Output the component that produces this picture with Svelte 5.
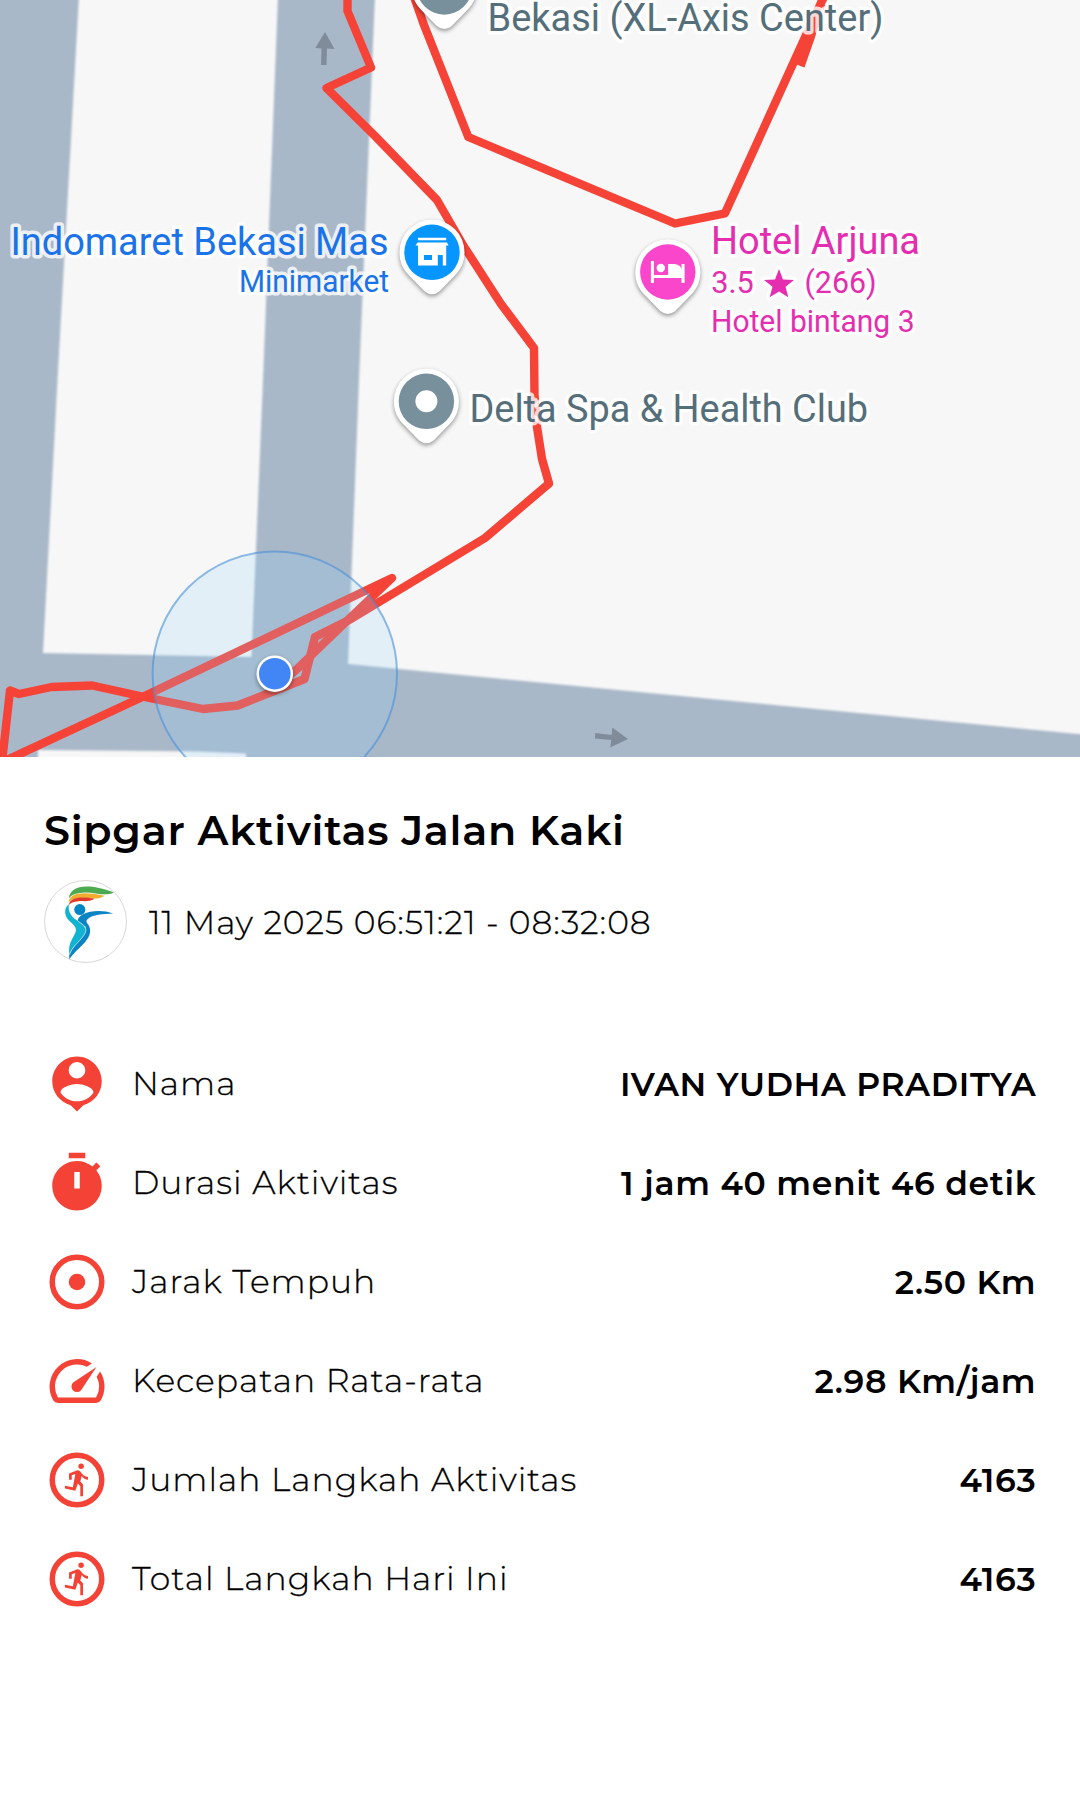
<script>
  const activity = {
    title: 'Sipgar Aktivitas Jalan Kaki',
    date: '11 May 2025 06:51:21 - 08:32:08'
  };

  const stats = [
    { icon: 'person', label: 'Nama', value: 'IVAN YUDHA PRADITYA' },
    { icon: 'timer', label: 'Durasi Aktivitas', value: '1 jam 40 menit 46 detik' },
    { icon: 'distance', label: 'Jarak Tempuh', value: '2.50 Km' },
    { icon: 'speed', label: 'Kecepatan Rata-rata', value: '2.98 Km/jam' },
    { icon: 'run', label: 'Jumlah Langkah Aktivitas', value: '4163' },
    { icon: 'run', label: 'Total Langkah Hari Ini', value: '4163' }
  ];

  const pins = [
    { x: 444.3, y: -13, color: '#78909c', kind: 'dot' },
    { x: 432, y: 252.3, color: '#0796ff', kind: 'store' },
    { x: 667.8, y: 272, color: '#f946ca', kind: 'hotel' },
    { x: 426.4, y: 401.3, color: '#78909c', kind: 'dot' }
  ];

  const places = [
    { text: 'Bekasi (XL-Axis Center)', x: 487.5, y: 30.5, width: 396, size: 38, color: '#546e7a' },
    { text: 'Indomaret Bekasi Mas', x: 10.5, y: 255, width: 378, size: 38, color: '#1a73e8' },
    { text: 'Minimarket', x: 239, y: 292.3, width: 150, size: 30.5, color: '#1a73e8' },
    { text: 'Hotel Arjuna', x: 711, y: 254.3, width: 209, size: 38, color: '#e52db0' },
    { text: '3.5', x: 711.3, y: 293.3, width: 42.5, size: 30.5, color: '#e52db0' },
    { text: '(266)', x: 804.5, y: 293.3, width: 72, size: 30.5, color: '#e52db0' },
    { text: 'Hotel bintang 3', x: 711, y: 332, width: 203.5, size: 30.5, color: '#e52db0' },
    { text: 'Delta Spa & Health Club', x: 469.5, y: 421.6, width: 398.5, size: 38, color: '#546e7a' }
  ];
</script>

<main>
  <svg class="map" viewBox="0 0 1080 757" width="1080" height="757">
    <rect width="1080" height="757" fill="#a9b8c9" />
    <g class="blocks">
      <path d="M79 -4L57.5 380L43 653L251.5 657L263 380L278 -4Z" />
      <path d="M375 -4L359 380L348 664L540 682.5L1084 734.5V-4Z" />
      <path d="M38 762V750L198 751.5L246 753.5V762Z" />
    </g>

    <g fill="#808c99">
      <path d="M325 32L334.5 49L327 48.5L326.5 65H321L321.5 48.5L315.3 48Z" />
      <path d="M628 739L612.3 727.5L611.7 735L595.3 733L595 738.5L611.2 740L610.2 747.5Z" />
    </g>

    <g class="route">
      <path d="M347.5 -5V11L371 67.5L326.5 88L375.5 136.5L437 200L463 245L501 304L534 348L534.5 395L537 427L542 459L549 483.5L485 538L351 619L315 637L304.5 679L237.6 705.5L203 709L144.5 697L92.3 685.5L51.5 687L19 694L10 690.5L2 762" />
      <path d="M-4 765L144.5 696L392 578L351 617L296 670L275 687" />
      <path d="M411 -12L424 25L468.3 137L675 223.5L725 213.3L807 33L828 -12" />
      <path d="M800.5 66L811 36L826 -12" />
    </g>

    <circle cx="274.8" cy="673.7" r="122.2" fill="#8fd0f8" fill-opacity="0.2" stroke="#4a90d9" stroke-opacity="0.6" stroke-width="2" />
    <circle class="shadow" cx="274.8" cy="673.7" r="18.3" fill="#fff" />
    <circle cx="274.8" cy="673.7" r="15.8" fill="#4285f4" />

    {#each pins as pin}
      <g transform="translate({pin.x} {pin.y})">
        <path class="shadow" fill="#fff" d="M0 -32.5A32.5 32.5 0 0 1 32.5 0C32.5 9 29.5 16 24 22L7.5 39Q0 45 -7.5 39L-24 22C-29.5 16 -32.5 9 -32.5 0A32.5 32.5 0 0 1 0 -32.5Z" />
        <circle r="27.7" fill={pin.color} />
        {#if pin.kind === 'dot'}
          <circle r="11" fill="#fff" />
        {:else if pin.kind === 'store'}
          <path fill="#fff" fill-rule="evenodd" d="M-14 -14.5H14.2V-12H-14ZM-14.5 -9.7H15L16.6 -6.7H14.2V13.2H10.8V2.6H5.8V13.2H-14V-6.7H-16.5ZM-8 2.6V7.7H0V2.6Z" />
        {:else}
          <path fill="#fff" d="M-16.9 -11H-13.9V3H13.7V-8H16.8V11H13.7V6H-13.9V11H-16.9ZM.3 -8H7Q13.7 -7 13.7 -2V4H.3Z" />
          <circle cx="-7" cy="-4" r="4.2" fill="#fff" />
        {/if}
      </g>
    {/each}

    {#each places as place}
      <text class="place" x={place.x} y={place.y} textLength={place.width} lengthAdjust="spacingAndGlyphs" font-size={place.size} fill={place.color}>{place.text}</text>
    {/each}
    <path class="star" fill="#e52db0" d="M779 269L783 279.5L794 280L785.5 286.8L788.3 297.3L779 291.4L769.7 297.3L772.5 286.8L764 280L775 279.5Z" />
  </svg>

  <section class="details">
    <h1>{activity.title}</h1>

    <div class="meta">
      <svg class="logo" viewBox="42 30 247 247">
        <circle cx="165.5" cy="153.5" r="122" fill="#fff" stroke="#c4c4c4" stroke-width="2" />
        <path fill="#4caa50" d="M116 84C120 48 168 36 250 67C222 80 200 67 165 67C140 68 125 73 116 84Z" />
        <path fill="#f1ad30" d="M115 97C118 70 150 62 223 77C202 90 185 84 160 83C135 84 122 88 115 97Z" />
        <path fill="#df3b2c" d="M116 105C118 84 145 77 193 86C176 96 160 92 145 93C130 94 122 97 116 105Z" />
        <circle cx="148.5" cy="118" r="16.5" fill="#0086c5" />
        <path fill="#0a84c3" d="M248 130C220 119 180 121 160 131C147 137 142 146 143 153L166 169C163 184 146 204 131 225C118 244 115 252 118 266C127 249 147 234 164 215C180 197 183 181 175 165C168 156 166 151 172 146C187 133 215 132 248 130Z" />
        <path fill="#10b3d0" d="M116 102C101 112 101 136 118 152C134 166 142 174 134 190C123 211 113 224 118 254C125 230 145 216 161 193C174 174 160 163 144 153C126 141 112 127 116 102Z" />
        <path fill="none" stroke="#fff" stroke-width="2" d="M118 252C125 229 146 216 161 194C175 174 160 164 144 153" />
      </svg>
      <span class="date">{activity.date}</span>
    </div>

    <ul>
      {#each stats as stat}
        <li>
          <svg class="icon" viewBox="0 0 24 24">
            {#if stat.icon === 'person'}
              <path d="M12 2c-4.97 0-9 4.03-9 9 0 4.17 2.84 7.67 6.69 8.69L12 22l2.31-2.31C18.16 18.67 21 15.17 21 11c0-4.97-4.03-9-9-9zm0 2c1.66 0 3 1.34 3 3s-1.34 3-3 3-3-1.34-3-3 1.34-3 3-3zm0 14.3c-2.5 0-4.71-1.28-6-3.22.03-1.99 4-3.08 6-3.08 1.99 0 5.97 1.09 6 3.08-1.29 1.94-3.5 3.22-6 3.22z" />
            {:else if stat.icon === 'timer'}
              <path fill-rule="evenodd" d="M9 1h6v2H9zM19.03 7.39l1.42-1.42c-.43-.51-.9-.99-1.41-1.41l-1.42 1.42C16.07 4.74 14.12 4 12 4c-4.97 0-9 4.03-9 9s4.02 9 9 9 9-4.03 9-9c0-2.12-.74-4.07-1.97-5.61zM13 14h-2V8h2v6z" />
            {:else if stat.icon === 'distance'}
              <circle class="ring" cx="12" cy="12" r="9" />
              <circle cx="12" cy="12" r="3" />
            {:else if stat.icon === 'speed'}
              <path d="M20.38 8.57l-1.23 1.85a8 8 0 0 1-.22 7.58H5.07A8 8 0 0 1 15.58 6.85l1.85-1.23A10 10 0 0 0 3.35 19a2 2 0 0 0 1.72 1h13.85a2 2 0 0 0 1.74-1 10 10 0 0 0-.27-10.44zm-9.79 6.84a2 2 0 0 0 2.83 0l5.66-8.49-8.49 5.66a2 2 0 0 0 0 2.83z" />
            {:else}
              <circle class="ring" cx="12" cy="12" r="9" />
              <circle cx="13.5" cy="7" r="1" />
              <path d="M16 11.9v-1c-1.1-.1-2-.7-2.6-1.7-.3-.5-.8-.8-1.5-.7L9.1 9.6v2.3h1v-1.6l1.3-.5-.9 4.8-2.9-.5v1l3.8.8.9-2.6.9 1v3.6h1v-4.3l-1-1.1.5-2c.6.8 1.4 1.4 2.3 1.4z" />
            {/if}
          </svg>
          <span class="label">{stat.label}</span>
          <strong>{stat.value}</strong>
        </li>
      {/each}
    </ul>
  </section>
</main>

<style>
  :global(body) {
    background: #fff;
  }

  main {
    width: 1080px;
    min-height: 1806px;
    background: #fff;
    color: #000;
    font-family: "Montserrat", "Inter", sans-serif;
    font-size: 33px;
    letter-spacing: 0.6875px;
  }

  .map {
    display: block;
    overflow: hidden;
  }

  .blocks {
    fill: #f7f7f7;
    filter: blur(0.8px);
  }

  .route path {
    fill: none;
    stroke: #f64337;
    stroke-width: 8.4;
    stroke-linejoin: round;
  }

  .shadow {
    filter: drop-shadow(0 2px 2px rgba(0, 0, 0, 0.4));
  }

  .place {
    font-family: "Roboto", sans-serif;
    letter-spacing: 0;
  }

  .place,
  .star {
    paint-order: stroke;
    stroke: rgba(255, 255, 255, 0.8);
    stroke-width: 7px;
    stroke-linejoin: round;
  }

  .details {
    padding: 47px 44px 0;
  }

  h1 {
    margin: 0;
    font-size: 41.25px;
    line-height: 52px;
    font-weight: 600;
    letter-spacing: 0.72px;
  }

  .meta {
    display: flex;
    align-items: center;
    gap: 22px;
    margin-top: 24px;
  }

  .logo {
    width: 83px;
    height: 83px;
  }

  .date,
  .label {
    font-weight: 300;
    -webkit-text-stroke: 0.3px #000;
  }

  .date {
    padding-top: 1px;
    letter-spacing: 0.95px;
  }

  ul {
    list-style: none;
    margin: 71px 0 0;
    padding: 0;
  }

  li {
    display: flex;
    align-items: center;
    height: 99px;
  }

  .icon {
    width: 66px;
    height: 66px;
    margin-right: 22px;
    fill: #f44336;
  }

  .ring {
    fill: none;
    stroke: #f44336;
    stroke-width: 2;
  }

  .label {
    padding-bottom: 1px;
    letter-spacing: 1px;
  }

  strong {
    margin-left: auto;
    margin-right: -0.3px;
    font-weight: 600;
  }
</style>
